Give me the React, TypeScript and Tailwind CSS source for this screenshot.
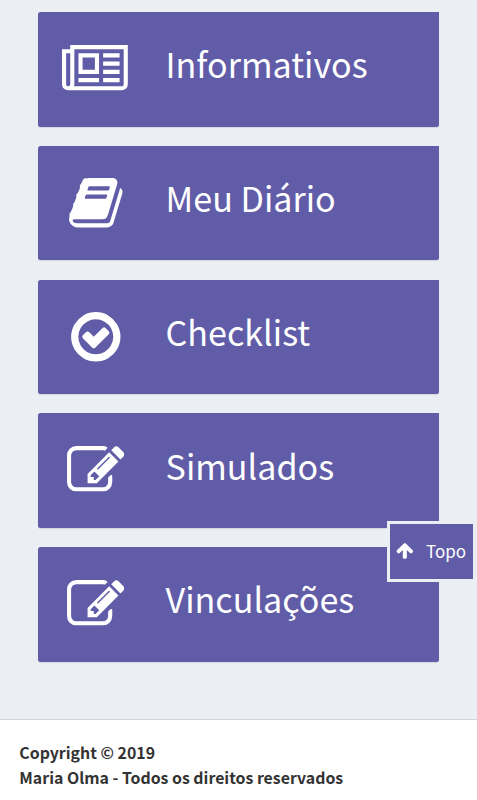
type IconName = "newspaper" | "book" | "check" | "edit" | "arrowUp";

type MenuItem = { id: string; label: string; icon: IconName };

const ICONS: Record<IconName, { width: number; d: string }> = {
  newspaper: {
    width: 2048,
    d: "M1024 512h-384v384h384v-384zm128 640v128h-640v-128h640zm0-768v640h-640v-640h640zm640 768v128h-512v-128h512zm0-256v128h-512v-128h512zm0-256v128h-512v-128h512zm0-256v128h-512v-128h512zm-1536 960v-960h-128v960q0 26 19 45t45 19 45-19 19-45zm1664 0v-1088h-1536v1088q0 33-11 64h1483q26 0 45-19t19-45zm128-1216v1216q0 80-56 136t-136 56h-1664q-80 0-136-56t-56-136v-1088h256v-128h1792z",
  },
  book: {
    width: 1792,
    d: "M1703 478q40 57 18 129l-275 906q-19 64-76.5 107.5t-122.5 43.5h-923q-77 0-148.5-53.5t-99.5-131.5q-24-67-2-127 0-4 3-27t4-37q1-8-3-21.5t-3-19.5q2-11 8-21t16.5-23.5 16.5-23.5q23-38 45-91.5t30-91.5q3-10 .5-30t-.5-28q3-11 17-28t17-23q21-36 42-92t25-90q1-9-2.5-32t.5-28q4-13 22-30.5t22-22.5q19-26 42.5-84.5t27.5-96.5q1-8-3-25.5t-2-26.5q2-8 9-18t18-23 17-21q8-12 16.5-30.5t15-35 16-36 19.5-32 26.5-23.5 36-11.5 47.5 5.5l-1 3q38-9 51-9h761q74 0 114 56t18 130l-274 906q-36 119-71.5 153.5t-128.5 34.5h-869q-27 0-38 15-11 16-1 43 24 70 144 70h923q29 0 56-15.5t35-41.5l300-987q7-22 5-57 38 15 59 43zm-1064 2q-4 13 2 22.5t20 9.5h608q13 0 25.5-9.5t16.5-22.5l21-64q4-13-2-22.5t-20-9.5h-608q-13 0-25.5 9.5t-16.5 22.5zm-83 256q-4 13 2 22.5t20 9.5h608q13 0 25.5-9.5t16.5-22.5l21-64q4-13-2-22.5t-20-9.5h-608q-13 0-25.5 9.5t-16.5 22.5z",
  },
  check: {
    width: 1792,
    d: "M1299 813l-422 422q-19 19-45 19t-45-19l-294-294q-19-19-19-45t19-45l102-102q19-19 45-19t45 19l147 147 275-275q19-19 45-19t45 19l102 102q19 19 19 45t-19 45zm141 83q0-148-73-273t-198-198-273-73-273 73-198 198-73 273 73 273 198 198 273 73 273-73 198-198 73-273zm224 0q0 209-103 385.5t-279.5 279.5-385.5 103-385.5-103-279.5-279.5-103-385.5 103-385.5 279.5-279.5 385.5-103 385.5 103 279.5 279.5 103 385.5z",
  },
  edit: {
    width: 1792,
    d: "M888 1184l116-116-152-152-116 116v56h96v96h56zm440-720q-16-16-33 1l-350 350q-17 17-1 33t33-1l350-350q17-17 1-33zm80 594v190q0 119-84.5 203.5t-203.5 84.5h-832q-119 0-203.5-84.5t-84.5-203.5v-832q0-119 84.5-203.5t203.5-84.5h832q63 0 117 25 15 7 18 23 3 17-9 29l-49 49q-14 14-32 8-23-6-45-6h-832q-66 0-113 47t-47 113v832q0 66 47 113t113 47h832q66 0 113-47t47-113v-126q0-13 9-22l64-64q15-15 35-7t20 29zm-96-738l288 288-672 672h-288v-288zm444 132l-92 92-288-288 92-92q28-28 68-28t68 28l152 152q28 28 28 68t-28 68z",
  },
  arrowUp: {
    width: 1792,
    d: "M1611 971q0 51-37 90l-75 75q-38 38-91 38-54 0-90-38l-294-293v704q0 52-37.5 84.5t-90.5 32.5h-128q-53 0-90.5-32.5t-37.5-84.5v-704l-294 293q-36 38-90 38t-90-38l-75-75q-38-38-38-90 0-53 38-91l651-651q35-37 90-37 54 0 91 37l651 651q37 39 37 91z",
  },
};

const items: MenuItem[] = [
  { id: "informativos", label: "Informativos", icon: "newspaper" },
  { id: "diario", label: "Meu Diário", icon: "book" },
  { id: "checklist", label: "Checklist", icon: "check" },
  { id: "simulados", label: "Simulados", icon: "edit" },
  { id: "vinculacoes", label: "Vinculações", icon: "edit" },
];

function Icon({ name, className }: { name: IconName; className: string }) {
  const icon = ICONS[name];
  return (
    <svg viewBox={`0 0 ${icon.width} 1792`} className={className} fill="currentColor" aria-hidden="true">
      <path d={icon.d} />
    </svg>
  );
}

function MenuCard({ item }: { item: MenuItem }) {
  return (
    <a
      href={`#${item.id}`}
      className="flex h-[114.4px] items-center rounded-[2.5px] rounded-tr-none bg-[#605ca8] text-white shadow-[0_1px_1px_rgba(0,0,0,0.1)]"
    >
      <span className="flex w-[114.8px] shrink-0 justify-center">
        <Icon name={item.icon} className="h-[57.6px] w-auto" />
      </span>
      <span className="pb-[11.8px] pl-[12.8px] text-[34.1px] leading-none whitespace-nowrap">{item.label}</span>
    </a>
  );
}

export default function App() {
  return (
    <div className="flex h-[800px] w-full flex-col overflow-hidden bg-[#ebeef3] font-['Noto_Sans_CJK_SC',sans-serif]">
      <main className="flex flex-1 flex-col gap-[19.35px] pt-[12.2px] pr-[38.5px] pl-[38px]">
        {items.map((item) => (
          <MenuCard key={item.id} item={item} />
        ))}
      </main>

      <footer className="h-[81px] border-t border-[#d2d6de] bg-white px-[19.3px] pt-[20px] text-[15.88px] leading-[25px] font-bold text-[#333]">
        <p>Copyright © 2019</p>
        <p>Maria Olma - Todos os direitos reservados</p>
      </footer>

      {/* back to top */}
      <a
        href="#top"
        className="fixed top-[521px] left-[387px] flex h-[61px] w-[89px] items-center border-[3px] border-[#ebeef3] bg-[#605ca8] pb-[3px] pl-[6px] text-white"
      >
        <Icon name="arrowUp" className="h-[19px] w-[19px]" />
        <span className="pl-[11px] text-[17px] leading-none">Topo</span>
      </a>
    </div>
  );
}
